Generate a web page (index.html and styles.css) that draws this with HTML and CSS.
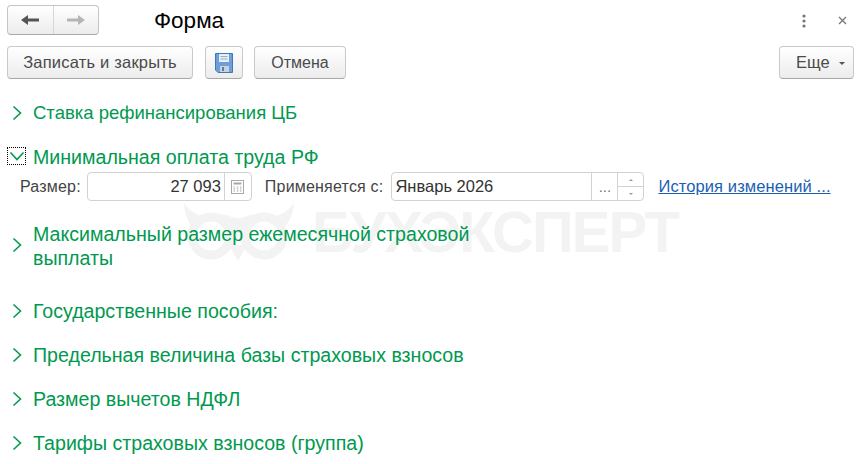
FILE: index.html
```html
<!DOCTYPE html>
<html lang="ru">
  <head>
  <meta charset="utf-8">
  <title>Форма</title>
  <link rel="stylesheet" href="styles.css">
  </head>
  <body>
    <div class="form">
      <div class="watermark">
        <svg class="owl" width="112" height="58" viewBox="0 0 112 58">
          <path d="M1 0 C10 13 24 16 34 12 C42 9 48 15 55 15 C62 15 70 9 78 12 C88 16 102 13 111 0 C110 16 102 26 92 30 L18 30 C8 26 2 16 1 0 Z" fill="#f3f3f4"/>
          <circle cx="28" cy="33" r="19" fill="#fff" stroke="#f3f3f4" stroke-width="9"/>
          <circle cx="81" cy="33" r="19" fill="#fff" stroke="#f3f3f4" stroke-width="9"/>
          <path d="M46 42 L55 58 L64 42 Z" fill="#f3f3f4"/>
        </svg>
        <span class="watermark-text">БУХЭКСПЕРТ</span>
      </div>

      <div class="titlebar">
        <div class="nav">
          <button class="nav-btn">
            <svg width="18" height="12" viewBox="0 0 18 12"><path d="M0 6 L7 1 V4.5 H18 V7.5 H7 V11 Z" fill="#555"/></svg>
          </button>
          <button class="nav-btn">
            <svg width="18" height="12" viewBox="0 0 18 12"><path d="M18 6 L11 1 V4.5 H0 V7.5 H11 V11 Z" fill="#b5b5b5"/></svg>
          </button>
        </div>
        <h1 class="title">Форма</h1>
        <div class="window-icons">
          <svg width="6" height="14" viewBox="0 0 6 14"><circle cx="3" cy="2" r="1.6" fill="#777"/><circle cx="3" cy="7" r="1.6" fill="#777"/><circle cx="3" cy="12" r="1.6" fill="#777"/></svg>
          <svg width="9" height="9" viewBox="0 0 9 9"><path d="M1 1 L8 8 M8 1 L1 8" stroke="#777" stroke-width="1.3" fill="none"/></svg>
        </div>
      </div>

      <div class="toolbar">
        <button class="btn btn-save-close">Записать и закрыть</button>
        <button class="btn btn-icon">
          <svg width="18" height="20" viewBox="0 0 18 20">
            <path d="M0.5 0.5 H17.5 V19.5 H3 L0.5 17 Z" fill="#6f9fd8" stroke="#3f78b5"/>
            <rect x="4" y="1" width="10" height="8" fill="#e9eff6"/>
            <path d="M5.5 3.5 H12.5 M5.5 6 H12.5" stroke="#8fb0d4"/>
            <rect x="5" y="13" width="9" height="6" fill="#c9d3dd"/>
            <rect x="7" y="14" width="2" height="4" fill="#5f7f9f"/>
          </svg>
        </button>
        <button class="btn btn-cancel">Отмена</button>
        <button class="btn btn-more">Еще<span class="caret"></span></button>
      </div>

      <div class="group group-first">
        <svg class="chevron" width="10" height="16" viewBox="0 0 10 16"><path d="M1.5 1.5 L8.5 8 L1.5 14.5" stroke="#00994f" stroke-width="1.6" fill="none"/></svg>
        <span class="group-title">Ставка рефинансирования ЦБ</span>
      </div>

      <div class="group group-open">
        <span class="focus-box">
          <svg width="16" height="10" viewBox="0 0 16 10"><path d="M1.5 1.5 L8 8.5 L14.5 1.5" stroke="#00994f" stroke-width="1.6" fill="none"/></svg>
        </span>
        <span class="group-title">Минимальная оплата труда РФ</span>
      </div>

      <div class="fields">
        <label class="field-label">Размер:</label>
        <div class="input input-size">
          <span class="input-value input-number">27 093</span>
          <span class="input-side side-calc">
            <svg width="13" height="14" viewBox="0 0 13 14">
              <rect x="0.5" y="0.5" width="12" height="13" fill="none" stroke="#a8a8a8"/>
              <rect x="2.5" y="2.5" width="8" height="2" fill="#a8a8a8"/>
              <path d="M2.5 7 H4 M5.8 7 H7.3 M9 7 H10.5 M2.5 9 H4 M5.8 9 H7.3 M9 9 H10.5 M2.5 11 H4 M5.8 11 H7.3 M9 11 H10.5" stroke="#a8a8a8"/>
            </svg>
          </span>
        </div>
        <label class="field-label label-period">Применяется с:</label>
        <div class="input input-period">
          <span class="input-value">Январь 2026</span>
          <span class="input-side side-dots">...</span>
          <span class="input-side side-spin">
            <span class="spin-btn"><i class="arrow-up"></i></span>
            <span class="spin-btn"><i class="arrow-down"></i></span>
          </span>
        </div>
        <a class="history-link" href="#">История изменений ...</a>
      </div>

      <div class="group group-two-lines">
        <svg class="chevron" width="10" height="16" viewBox="0 0 10 16"><path d="M1.5 1.5 L8.5 8 L1.5 14.5" stroke="#00994f" stroke-width="1.6" fill="none"/></svg>
        <span class="group-title">Максимальный размер ежемесячной страховой<br>выплаты</span>
      </div>

      <div class="group group-benefits">
        <svg class="chevron" width="10" height="16" viewBox="0 0 10 16"><path d="M1.5 1.5 L8.5 8 L1.5 14.5" stroke="#00994f" stroke-width="1.6" fill="none"/></svg>
        <span class="group-title">Государственные пособия:</span>
      </div>

      <div class="group">
        <svg class="chevron" width="10" height="16" viewBox="0 0 10 16"><path d="M1.5 1.5 L8.5 8 L1.5 14.5" stroke="#00994f" stroke-width="1.6" fill="none"/></svg>
        <span class="group-title">Предельная величина базы страховых взносов</span>
      </div>

      <div class="group">
        <svg class="chevron" width="10" height="16" viewBox="0 0 10 16"><path d="M1.5 1.5 L8.5 8 L1.5 14.5" stroke="#00994f" stroke-width="1.6" fill="none"/></svg>
        <span class="group-title">Размер вычетов НДФЛ</span>
      </div>

      <div class="group">
        <svg class="chevron" width="10" height="16" viewBox="0 0 10 16"><path d="M1.5 1.5 L8.5 8 L1.5 14.5" stroke="#00994f" stroke-width="1.6" fill="none"/></svg>
        <span class="group-title">Тарифы страховых взносов (группа)</span>
      </div>
    </div>
  </body>
</html>
```

FILE: styles.css
```css
html, body { height: 100%; padding: 0; margin: 0; overflow: hidden; }
body { background: #fff; color: #333; font: 15px/1.2 "Liberation Sans", Arial, sans-serif; }
button { font: inherit; color: #4a4a4a; cursor: pointer; padding: 0; }

.form { position: relative; height: 464px; padding: 5px 8px 0 7px; box-sizing: border-box; }

/* watermark lies under the form */
.watermark { position: absolute; left: 183px; top: 203px; display: flex; align-items: flex-start; gap: 17px; }
.watermark-text { font-size: 58px; line-height: 58px; font-weight: 700; color: #f3f3f4; letter-spacing: -1.9px; }
.group, .fields, .titlebar, .toolbar { position: relative; }

.titlebar { display: flex; align-items: center; height: 30px; }
.nav { display: flex; width: 92px; height: 30px; box-sizing: border-box; border: 1px solid #c4c4c4; border-bottom-color: #aaa; border-radius: 4px; background: linear-gradient(#fff, #ececec); }
.nav-btn { flex: 1; display: flex; align-items: center; justify-content: center; background: none; border: none; }
.nav-btn + .nav-btn { border-left: 1px solid #d6d6d6; }
.title { margin: 0 0 0 55px; font-size: 22.5px; font-weight: 400; color: #000; }
.window-icons { margin-left: auto; margin-right: 7px; display: flex; align-items: center; gap: 31px; padding-top: 1px; }

.toolbar { display: flex; height: 33px; margin-top: 11px; }
.btn { height: 33px; box-sizing: border-box; border: 1px solid #c9c9c9; border-bottom-color: #a8a8a8; border-radius: 4px; background: linear-gradient(#fff, #ececec); display: flex; align-items: center; justify-content: center; font-size: 16.5px; }
.btn-save-close { width: 186px; letter-spacing: 0.2px; }
.btn-icon { width: 38px; margin-left: 12px; }
.btn-cancel { width: 92px; margin-left: 11px; font-size: 16px; }
.btn-more { width: 75px; margin-left: auto; justify-content: flex-start; padding-left: 16px; }
.caret { width: 0; height: 0; margin-left: 9px; margin-top: 2px; border: 3px solid transparent; border-top-color: #555; border-bottom: none; }

.group { display: flex; align-items: flex-start; height: 22px; margin-top: 22px; color: #00994f; }
.group-title { margin-left: 11px; font-size: 19.6px; line-height: 24px; }
.chevron { margin-left: 5px; margin-top: 4px; flex: none; }
.group-first { margin-top: 22px; }
.group-first .group-title { font-size: 18.5px; }

.group-open { margin-top: 22px; }
.focus-box { width: 19px; height: 18px; margin-top: 2px; box-sizing: border-box; border: 1px dotted #000; display: flex; align-items: center; justify-content: center; flex: none; }
.group-open .group-title { margin-left: 7px; }

.fields { display: flex; align-items: center; height: 29px; margin-top: 5px; }
.field-label { margin-left: 13px; color: #444; font-size: 16px; letter-spacing: 0.2px; }
.label-period { margin-left: 13px; }
.input { display: flex; height: 29px; margin-left: 6px; box-sizing: border-box; border: 1px solid #d2d2d2; border-radius: 4px; background: #fff; }
.input-size { width: 165px; }
.input-period { width: 253px; margin-left: 8px; }
.input-value { flex: 1; padding: 0 3px; line-height: 26px; font-size: 16.5px; color: #333; }
.input-number { text-align: right; }
.input-side { display: flex; align-items: center; justify-content: center; border-left: 1px solid #d2d2d2; }
.side-calc { width: 26px; }
.side-dots { width: 25px; color: #777; }
.side-spin { width: 25px; flex-direction: column; align-items: stretch; }
.spin-btn { flex: 1; display: flex; align-items: center; justify-content: center; }
.spin-btn + .spin-btn { border-top: 1px solid #d2d2d2; }
.arrow-up, .arrow-down { width: 0; height: 0; border: 2.5px solid transparent; }
.arrow-up { border-bottom-color: #999; border-top: none; }
.arrow-down { border-top-color: #999; border-bottom: none; }
.history-link { margin-left: 14px; color: #1a5fb4; font-size: 16.5px; letter-spacing: 0.1px; }

.group-two-lines { height: 48px; margin-top: 21px; }
.group-two-lines .chevron { margin-top: 15px; }
.group-benefits { margin-top: 29px; }
```
